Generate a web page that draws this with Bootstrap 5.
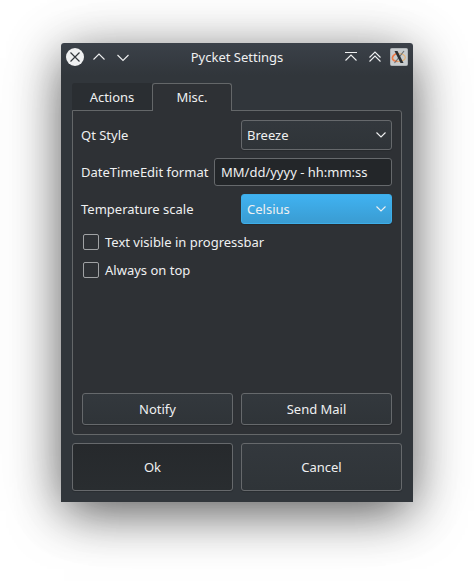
<!DOCTYPE html>
<html lang="en">
<head>
<meta charset="utf-8">
<title>Pycket Settings</title>
<link href="https://cdn.jsdelivr.net/npm/bootstrap@5.3.0/dist/css/bootstrap.min.css" rel="stylesheet">
<style>
body{background:#fff;font:13px/18px "Noto Sans",sans-serif;color:#eff0f1;padding:43px 61px;height:581px;overflow:hidden}
.window{width:352px;height:459px;background:linear-gradient(#3b4149 0,#31363b 32px);border-radius:3px 3px 0 0;box-shadow:0 12px 48px -3px rgba(0,0,0,.64),0 6px 70px rgba(0,0,0,.1)}
.titlebar{height:28px;padding:0 5px}
.titlebar svg,.picker svg{display:block;flex:none}
.side{width:90px}
.glyph{fill:none;stroke:#eff0f1;stroke-width:1.1}
.content-area{padding:12px 11px 11px}
.tab-strip{height:28px;margin-bottom:-1px;position:relative}
.tab-strip .nav-link{width:80px;height:27px;padding:0;color:#eff0f1;background:#2a2e32;border:0;border-radius:3px 0 0 0;font-size:inherit}
.tab-strip .nav-link.active{height:28px;padding-bottom:1px;color:#eff0f1;background:#2e3135;border:1px solid #646769;border-bottom:0;border-radius:3px 3px 0 0}
.pane{height:325px;background:#2e3135;border:1px solid #646769;border-radius:0 3px 3px 3px;padding:9px 9px 9px 8px}
.btn,.picker,.entry{font-size:inherit;line-height:18px;color:#eff0f1;border:1px solid #66696c;border-radius:3px;background:linear-gradient(#33383d,#2f3438);box-shadow:0 1px 1px rgba(0,0,0,.16)}
.picker{width:151px;height:30px;padding:0 3px 0 5px}
.picker.chosen{background:linear-gradient(#40b2f1,#3a9cd2);border-color:#3daee9}
.entry{width:178px;height:28px;padding:0 6px;background:#232629;box-shadow:none}
.btn{padding:0}
.btn-tool{height:32px;margin-left:1px}
.btn-tool+.btn-tool{margin-left:0}
.btn-main{height:48px}
.btn-main.pressed{background:linear-gradient(#26292c,#292d30)}
.scale-row{margin-bottom:10px}
.option{height:16px;margin:0 0 12px 2px;gap:6px}
.option .form-check-input{width:16px;height:16px;margin:0;background-color:transparent;border:1px solid #a0a2a4;border-radius:2px}
</style>
</head>
<body>
<main class="window d-flex flex-column">
  <header class="titlebar d-flex align-items-center justify-content-between">
    <div class="side d-flex gap-1">
      <svg width="20" height="20"><circle cx="9" cy="10" r="9" fill="#eff0f1"/><path d="M4.500 5.500l9 9m0-9l-9 9" fill="none" stroke="#33383d" stroke-width="1.200"/></svg>
      <svg width="20" height="20" class="glyph"><path d="M3.500 12.500L9 7l5.500 5.500"/></svg>
      <svg width="20" height="20" class="glyph"><path d="M3.500 8L9 13.500 14.500 8"/></svg>
    </div>
    <div>Pycket Settings</div>
    <div class="side d-flex gap-1 justify-content-end">
      <svg width="20" height="20" class="glyph"><path d="M3 5.500h12M3.500 13.500L9 8l5.500 5.500"/></svg>
      <svg width="20" height="20" class="glyph"><path d="M3.500 10.500L9 5l5.500 5.500M3.500 14.500L9 9l5.500 5.500"/></svg>
      <svg width="18" height="20"><rect x=".5" y="1.500" width="17" height="17" rx="1" fill="#c8ccce" stroke="#aeb3b6"/><ellipse cx="9" cy="10.500" rx="6.300" ry="4" fill="none" stroke="#e5b276" stroke-width="1.200"/><path d="M6.500 6.500Q1.500 9 2.500 12q1 2.500 5 2.500" fill="none" stroke="#ee7a4a" stroke-width="1.500"/><path d="M14 4L4.500 16" stroke="#6a6e71" stroke-width="1.100"/><path d="M4.500 4h3L13.500 16h-3z" fill="#2c3033"/></svg>
    </div>
  </header>
  <div class="content-area">
    <nav class="nav tab-strip">
      <a class="nav-link d-flex align-items-center justify-content-center">Actions</a>
      <a class="nav-link active d-flex align-items-center justify-content-center">Misc.</a>
    </nav>
    <section class="pane d-flex flex-column">
      <div class="d-flex justify-content-between align-items-center mb-2"><span>Qt Style</span>
        <div class="picker d-flex align-items-center justify-content-between"><span>Breeze</span><svg width="14" height="14" class="glyph"><path d="M2.500 4.500L7 9l4.500-4.500"/></svg></div></div>
      <div class="d-flex justify-content-between align-items-center mb-2"><span class="text-nowrap">DateTimeEdit format</span>
        <div class="entry d-flex align-items-center text-nowrap">MM/dd/yyyy - hh:mm:ss</div></div>
      <div class="scale-row d-flex justify-content-between align-items-center"><span>Temperature scale</span>
        <div class="picker chosen d-flex align-items-center justify-content-between"><span>Celsius</span><svg width="14" height="14" class="glyph"><path d="M2.500 4.500L7 9l4.500-4.500"/></svg></div></div>
      <div class="option d-flex align-items-center"><input class="form-check-input" type="checkbox" id="bar-text"><label for="bar-text">Text visible in progressbar</label></div>
      <div class="option d-flex align-items-center"><input class="form-check-input" type="checkbox" id="on-top"><label for="on-top">Always on top</label></div>
      <div class="d-flex gap-2 mt-auto"><button class="btn btn-tool w-50">Notify</button><button class="btn btn-tool w-50">Send Mail</button></div>
    </section>
    <div class="d-flex gap-2 mt-2"><button class="btn btn-main w-50 pressed">Ok</button><button class="btn btn-main w-50">Cancel</button></div>
  </div>
</main>
<script src="https://cdn.jsdelivr.net/npm/bootstrap@5.3.0/dist/js/bootstrap.bundle.min.js"></script>
</body>
</html>
